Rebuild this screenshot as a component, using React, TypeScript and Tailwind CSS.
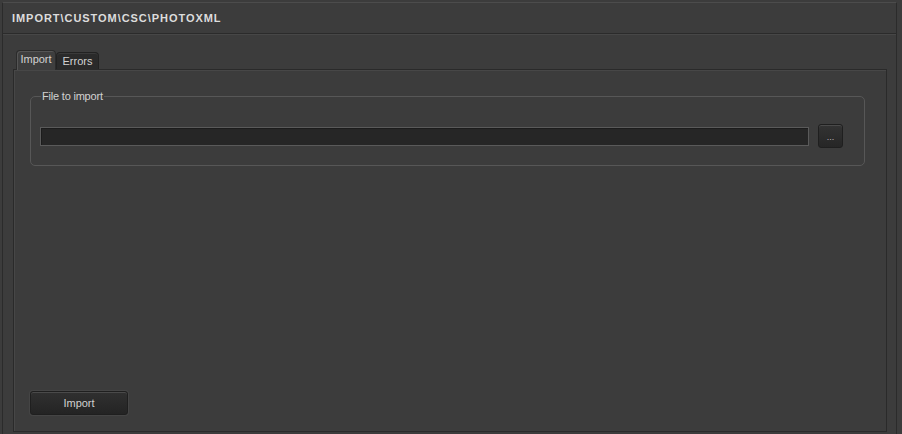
export default function App() {
  return (
    <div className="h-[434px] w-[902px] bg-[#3c3c3c] pl-[2px] pr-[5px] pt-[2px] font-['Liberation_Sans',sans-serif] text-[11px] text-[#d2d2d2]">
      <div className="flex h-full flex-col border-l border-r border-t border-l-[#2b2b2b] border-r-[#2b2b2b] border-t-[#4c4c4c]">
        {/* Title bar */}
        <div className="flex h-[31px] items-center border-b border-b-[#2b2b2b] pl-[9px]">
          <span className="font-bold tracking-[0.95px] text-[#dcdcdc]">IMPORT\CUSTOM\CSC\PHOTOXML</span>
        </div>
        <div className="h-px bg-[#474747]" />

        <div className="flex flex-1 flex-col pl-[10px] pr-[9px] pt-[15px]">
          {/* Tabs */}
          <div className="flex h-[19px] items-end pl-[3px]">
            <div className="relative -mb-px flex h-[20px] w-[40px] items-center justify-center rounded-t-[4px] border border-b-0 border-[#2b2b2b] bg-[#3e3e3e] shadow-[inset_1px_1px_0_#555]">
              <span className="-mt-[2px]">Import</span>
            </div>
            <div className="flex h-[17px] w-[43px] items-center justify-center rounded-t-[4px] border border-b-0 border-[#222] bg-[#2a2a2a] shadow-[inset_0_1px_0_#3a3a3a]">
              <span>Errors</span>
            </div>
          </div>

          {/* Tab panel */}
          <div className="flex flex-1 flex-col border border-[#2a2a2a] pb-[16px] pl-[16px] pr-[21px] pt-[20px] shadow-[inset_1px_1px_0_#474747]">
            <fieldset className="h-[76px] rounded-[5px] border border-[#575757] pb-0 pl-[9px] pr-[21px] pt-0">
              <legend className="ml-[1px] px-[1px] leading-[12px] tracking-[-0.2px]">File to import</legend>
              <div className="mt-[22px] flex items-center gap-[9px]">
                <div className="h-[19px] flex-1 border border-[#5a5a5a] bg-[#262626] shadow-[inset_1px_1px_0_#1c1c1c]" />
                <button className="flex h-[24px] w-[25px] items-end justify-center rounded-[3px] border border-[#1f1f1f] bg-gradient-to-b from-[#333] to-[#262626] pb-[5px] text-[9px] leading-none text-[#bbb] shadow-[inset_0_1px_0_#4a4a4a]">
                  ...
                </button>
              </div>
            </fieldset>

            <div className="flex-1" />

            <button className="flex h-[24px] w-[98px] items-center justify-center rounded-[3px] border border-[#1f1f1f] bg-gradient-to-b from-[#303030] to-[#242424] text-[#d0d0d0] shadow-[inset_0_1px_0_#4a4a4a,0_0_0_1px_#454545]">
              Import
            </button>
          </div>
        </div>
        <div className="h-[2px]" />
      </div>
    </div>
  );
}
